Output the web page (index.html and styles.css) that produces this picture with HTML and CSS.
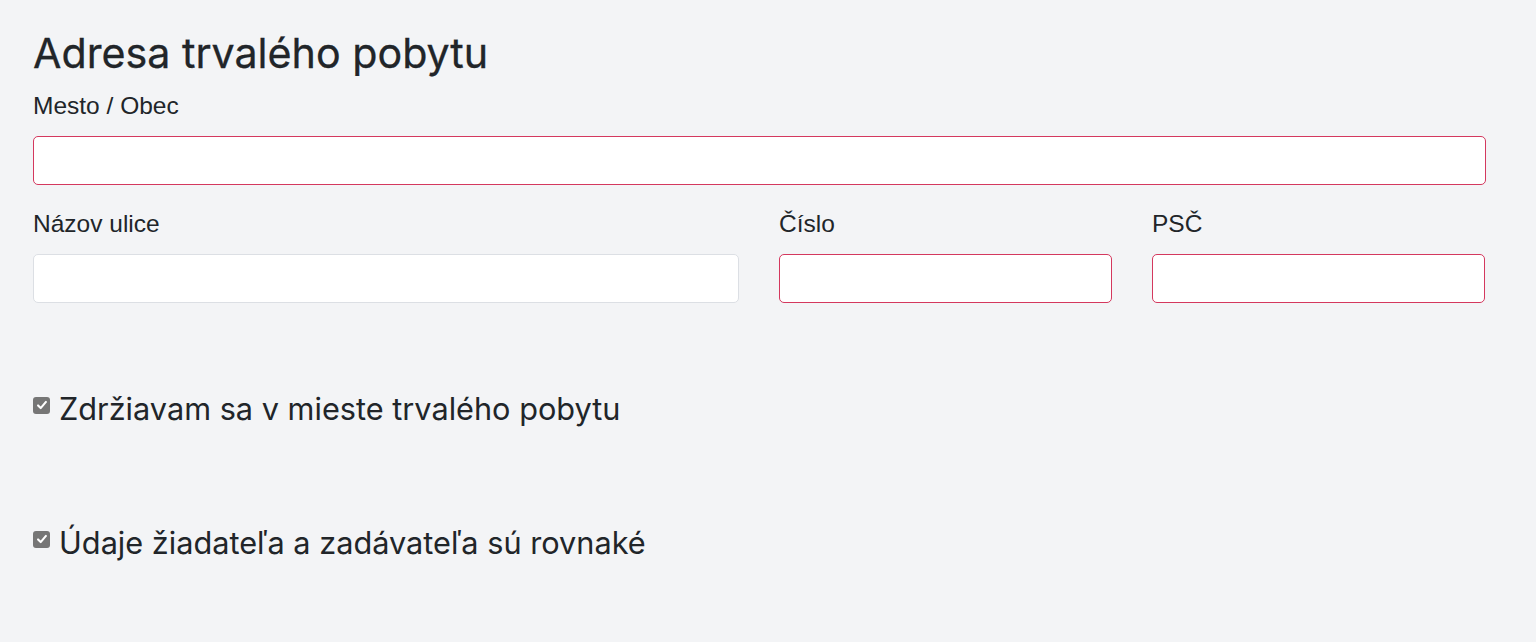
FILE: index.html
```html
<!DOCTYPE html>
<html lang="sk">
<head>
<meta charset="utf-8">
<title>Adresa trvalého pobytu</title>
<link rel="stylesheet" href="styles.css">
</head>
<body>
<div class="page">
  <h2 class="title">Adresa trvalého pobytu</h2>
  <div class="field">
    <label class="label">Mesto / Obec</label>
    <div class="input invalid"></div>
  </div>
  <div class="row">
    <div class="field">
      <label class="label">Názov ulice</label>
      <div class="input"></div>
    </div>
    <div class="field">
      <label class="label">Číslo</label>
      <div class="input invalid"></div>
    </div>
    <div class="field">
      <label class="label">PSČ</label>
      <div class="input invalid"></div>
    </div>
  </div>
  <div class="check first">
    <span class="box"><svg viewBox="0 0 16 16" width="14" height="14"><path d="M3.5 8.5 L6.5 11.5 L12.5 4.5" fill="none" stroke="#fff" stroke-width="2.4" stroke-linecap="round" stroke-linejoin="round"/></svg></span>
    <span class="check-text">Zdržiavam sa v mieste trvalého pobytu</span>
  </div>
  <div class="check second">
    <span class="box"><svg viewBox="0 0 16 16" width="14" height="14"><path d="M3.5 8.5 L6.5 11.5 L12.5 4.5" fill="none" stroke="#fff" stroke-width="2.4" stroke-linecap="round" stroke-linejoin="round"/></svg></span>
    <span class="check-text">Údaje žiadateľa a zadávateľa sú rovnaké</span>
  </div>
</div>
</body>
</html>
```
FILE: styles.css
```css
html, body {
  margin: 0;
  padding: 0;
  background: #f3f4f6;
  color: #212529;
}
.page {
  padding: 28px 50px 0 33px;
}
.title {
  margin: 0;
  font-family: Inter, "Noto Sans", sans-serif;
  font-weight: 400;
  font-size: 41.2px;
  line-height: 50px;
  -webkit-text-stroke: 0.3px #212529;
}
.label {
  display: block;
  font-family: "Liberation Sans", Arial, sans-serif;
  font-size: 24.5px;
  line-height: 28px;
  margin: 14px 0 16px;
}
.input {
  box-sizing: border-box;
  height: 49px;
  background: #fff;
  border: 1.5px solid #dcdfe4;
  border-radius: 5px;
}
.input.invalid {
  border-color: #d4385e;
}
.row {
  display: grid;
  grid-template-columns: 706px 333px 333px;
  column-gap: 40px;
  margin-top: 25px;
}
.row .label {
  margin-top: 0;
}
.check {
  display: flex;
  align-items: center;
  font-family: Inter, "Noto Sans", sans-serif;
  font-size: 30.7px;
  line-height: 36px;
}
.check.first {
  margin-top: 88px;
}
.check.second {
  margin-top: 98px;
}
.box {
  width: 17px;
  height: 17px;
  border-radius: 3px;
  background: #767676;
  display: flex;
  align-items: center;
  justify-content: center;
  margin-right: 9px;
  margin-top: -8px;
}
.check-text {
  white-space: nowrap;
}
```
